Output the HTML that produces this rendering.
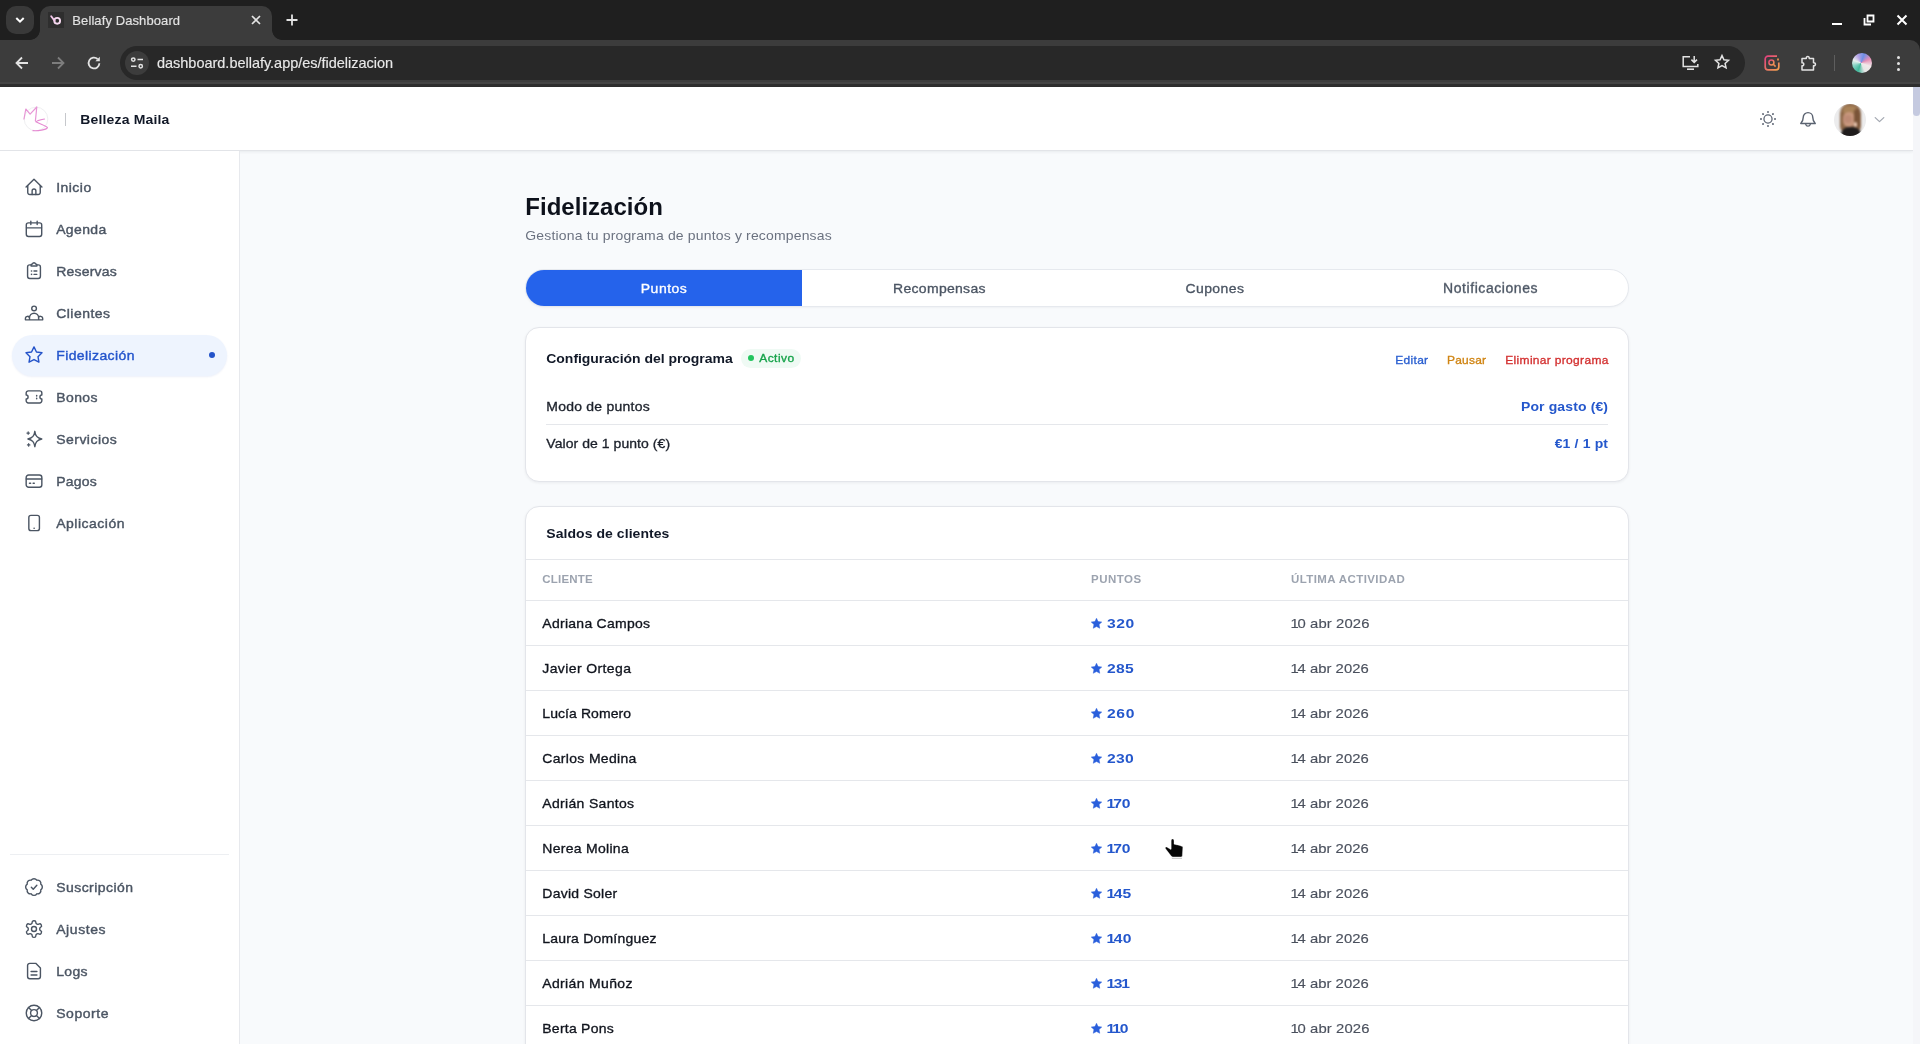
<!DOCTYPE html>
<html lang="es">
<head>
<meta charset="utf-8">
<title>Bellafy Dashboard</title>
<style>
*{box-sizing:border-box;margin:0;padding:0}
html,body{width:1920px;height:1044px;overflow:hidden;background:#f8fafc;font-family:"Liberation Sans",sans-serif;}
body{position:relative}
.abs{position:absolute}
svg{position:absolute;overflow:visible}
/* ---------- browser chrome ---------- */
#tabstrip{position:absolute;left:0;top:0;width:1920px;height:52px;background:#1f1f1f}
#toolbar{position:absolute;left:0;top:40px;width:1920px;height:42px;background:#3c3c3c;border-radius:0 10px 0 0}
#tbline1{position:absolute;left:0;top:82px;width:1920px;height:2px;background:#444}
#tbline2{position:absolute;left:0;top:84px;width:1920px;height:3px;background:#2d2d2d}
#tabsearch{position:absolute;left:6px;top:6px;width:28px;height:28px;border-radius:10px;background:#393939}
#tab{position:absolute;left:40px;top:6px;width:232px;height:34px;background:#3c3c3c;border-radius:10px 10px 0 0}
#tab:before,#tab:after{content:"";position:absolute;bottom:0;width:10px;height:10px}
#tab:before{left:-10px;background:radial-gradient(circle at 0 0,rgba(60,60,60,0) 9.5px,#3c3c3c 10.2px)}
#tab:after{right:-10px;background:radial-gradient(circle at 100% 0,rgba(60,60,60,0) 9.5px,#3c3c3c 10.2px)}
#urlbar{position:absolute;left:120px;top:46px;width:1625px;height:34px;border-radius:17px;background:#282828}
#siteinfo{position:absolute;left:125px;top:51px;width:24px;height:24px;border-radius:12px;background:#3c3c3c}
.ci{fill:none;stroke:#e3e3e3;stroke-width:2;stroke-linecap:butt;stroke-linejoin:miter}
/* ---------- app ---------- */
#apphead{position:absolute;left:0;top:87px;width:1913px;height:64px;background:#fff;border-bottom:1px solid #e2e4e8;box-shadow:0 1px 3px rgba(15,23,42,.07)}
#sidebar{position:absolute;left:0;top:151px;width:240px;height:893px;background:#fff;border-right:1px solid #e7e9ed}
#scroll{position:absolute;left:1913px;top:87px;width:7px;height:957px;background:#f5f6f9}
#thumb{position:absolute;left:1913px;top:87px;width:7px;height:29px;background:#c5cae0;border-radius:0 0 4px 4px}
.ico{width:20px;height:20px;left:24px;stroke:#4b5563;fill:none;stroke-width:1.7;stroke-linecap:round;stroke-linejoin:round}
#active{position:absolute;left:12px;top:335px;width:215px;height:41px;border-radius:21px;background:#eef4fe;box-shadow:0 1px 2px rgba(30,64,175,.08)}
.card{position:absolute;left:525px;width:1104px;background:#fff;border:1px solid #e3e5ea;border-radius:14px;box-shadow:0 1px 3px rgba(15,23,42,.06)}
.t{position:absolute;white-space:nowrap}
.hr{position:absolute;height:1px;background:#e5e7eb}
.star{width:13px;height:13px;fill:#2a5fdc;stroke:#2a5fdc;stroke-width:.9;stroke-linejoin:round}
</style>
</head>
<body>
<!-- ============ browser chrome ============ -->
<div id="tabstrip"></div>
<div id="toolbar"></div>
<div id="tbline1"></div><div id="tbline2"></div>
<div id="tabsearch"></div>
<svg class="ci" style="left:14px;top:14px;width:12px;height:12px" viewBox="0 0 12 12"><path d="M2.3 4l3.7 3.6L9.7 4" stroke="#fff" stroke-width="2"/></svg>
<div id="tab"></div>
<!-- favicon -->
<div class="abs" style="left:48px;top:12px;width:16px;height:16px;background:#2e2e2e"></div>
<svg style="left:48px;top:12px;width:16px;height:16px" viewBox="0 0 16 16"><circle cx="9.2" cy="8.8" r="2.9" fill="none" stroke="#f6d9f0" stroke-width="1.9"/><path d="M3.2 4.2 6.6 8.8" stroke="#f3c6ea" stroke-width="1.9" stroke-linecap="round"/></svg>
<!-- tab close -->
<svg class="ci" style="left:250px;top:14px;width:12px;height:12px" viewBox="0 0 12 12"><path d="M2 2l8 8M10 2l-8 8" stroke="#e3e3e3" stroke-width="1.7"/></svg>
<!-- new tab + -->
<svg class="ci" style="left:285px;top:13px;width:14px;height:14px" viewBox="0 0 14 14"><path d="M7 1.5v11M1.5 7h11" stroke="#e3e3e3" stroke-width="1.8"/></svg>
<!-- window controls -->
<div class="abs" style="left:1832px;top:23px;width:10px;height:2px;background:#fff"></div>
<svg class="ci" style="left:1863px;top:14px;width:12px;height:12px" viewBox="0 0 12 12"><path d="M4.5 1.5h6v6h-6z" stroke="#fff" stroke-width="1.8"/><path d="M1.5 4v6.5H8" stroke="#fff" stroke-width="1.8"/></svg>
<svg class="ci" style="left:1896px;top:14px;width:12px;height:12px" viewBox="0 0 12 12"><path d="M1.5 1.5l9 9M10.5 1.5l-9 9" stroke="#fff" stroke-width="2"/></svg>
<!-- nav buttons -->
<svg class="ci" style="left:14px;top:55px;width:16px;height:16px" viewBox="0 0 16 16"><path d="M14 8H3M8 2.5 2.5 8 8 13.5" stroke="#e3e3e3" stroke-width="1.8"/></svg>
<svg class="ci" style="left:50px;top:55px;width:16px;height:16px" viewBox="0 0 16 16"><path d="M2 8h11M8 2.5 13.5 8 8 13.5" stroke="#7d7d7d" stroke-width="1.8"/></svg>
<svg class="ci" style="left:86px;top:55px;width:16px;height:16px" viewBox="0 0 16 16"><path d="M13.4 8.3A5.4 5.4 0 1 1 11.6 4" stroke="#e3e3e3" stroke-width="1.8"/><path d="M13.8 1.8v4.4H9.4z" fill="#e3e3e3" stroke="none"/></svg>
<div id="urlbar"></div>
<div id="siteinfo"></div>
<svg class="ci" style="left:129px;top:55px;width:16px;height:16px" viewBox="0 0 16 16"><circle cx="4.3" cy="4.6" r="1.7" stroke-width="1.5"/><path d="M8.5 4.6h5.5M2 11.3h5.5" stroke-width="1.5"/><circle cx="11.7" cy="11.3" r="1.7" stroke-width="1.5"/></svg>
<!-- install -->
<svg class="ci" style="left:1682px;top:55px;width:17px;height:16px" viewBox="0 0 17 16"><path d="M8 1.7H1.2v9.8h14.6V9" stroke-width="1.5"/><path d="M5 14.2h7" stroke-width="1.6"/><path d="M12.2 1v6M9.4 4.6l2.8 2.8L15 4.6" stroke-width="1.5"/></svg>
<!-- bookmark star -->
<svg class="ci" style="left:1714px;top:54px;width:16px;height:16px" viewBox="0 0 16 16"><path d="M8 1.6l1.95 4.2 4.55.5-3.4 3.1.95 4.5L8 11.6l-4.05 2.3.95-4.5-3.4-3.1 4.55-.5z" stroke-width="1.5" stroke-linejoin="miter"/></svg>
<!-- extension (pink/orange) -->
<svg style="left:1764px;top:55px;width:16px;height:16px" viewBox="0 0 16 16"><defs><linearGradient id="gx" x1="0" y1="0" x2="1" y2="1"><stop offset="0" stop-color="#e23f7f"/><stop offset="1" stop-color="#f2a24e"/></linearGradient></defs><path d="M13 1.2H4A2.8 2.8 0 0 0 1.2 4v8A2.8 2.8 0 0 0 4 14.8h8a2.8 2.8 0 0 0 2.8-2.8V7.5" fill="none" stroke="url(#gx)" stroke-width="1.7"/><circle cx="7.4" cy="7.4" r="2.5" fill="none" stroke="url(#gx)" stroke-width="1.5"/><path d="M9.3 9.3l2.3 2.3" stroke="#ee8a55" stroke-width="1.5"/><path d="M14 3.5v2" stroke="#f0964f" stroke-width="1.7"/></svg>
<!-- puzzle -->
<svg class="ci" style="left:1800px;top:54px;width:18px;height:18px" viewBox="0 0 18 18"><path d="M2 4.5h4.3c-.5-2.6 3.4-2.6 2.9 0H13.5v4.3c2.6-.5 2.6 3.4 0 2.9V16H2v-4.3c2.4.4 2.4-3.3 0-2.9z" stroke-width="1.5" stroke-linejoin="round"/></svg>
<div class="abs" style="left:1834px;top:55px;width:1px;height:16px;background:#5e5e5e"></div>
<!-- chrome profile avatar -->
<div class="abs" style="left:1852px;top:53px;width:20px;height:20px;border-radius:10px;background:conic-gradient(from 200deg at 45% 50%,#3fb79a,#7fd0c0,#e9f0ee,#b9a6e6,#6e8fe6,#e58fb6,#f1e9ea,#e6e6e6,#3fb79a)"></div>
<!-- menu dots -->
<div class="abs" style="left:1896.5px;top:56px;width:3px;height:3px;border-radius:2px;background:#e3e3e3"></div>
<div class="abs" style="left:1896.5px;top:61.5px;width:3px;height:3px;border-radius:2px;background:#e3e3e3"></div>
<div class="abs" style="left:1896.5px;top:67.5px;width:3px;height:3px;border-radius:2px;background:#e3e3e3"></div>

<!-- ============ app header ============ -->
<div id="apphead"></div>
<svg style="left:22px;top:105px;width:28px;height:28px" viewBox="22 105 28 28"><circle cx="36" cy="119" r="11.8" fill="none" stroke="#efeff1" stroke-width="1"/><path d="M24 119 25.8 109l4.3 5.2L36.8 107l-1.4 13.9" fill="none" stroke="#e796d6" stroke-width="1.2" stroke-linejoin="round" stroke-linecap="round"/><path d="M44.5 119c-4 .8-8 1.6-8.6 2.8C40 124 47 126 47.4 127.6 46 130 38 131 33 130.7" fill="none" stroke="#e58ad2" stroke-width="1.2" stroke-linecap="round"/></svg>
<div class="abs" style="left:65px;top:113px;width:1px;height:13px;background:#c6c8cc"></div>
<!-- sun -->
<svg class="ico" style="left:1759px;top:110px;width:18px;height:18px;stroke:#5b6371" viewBox="0 0 24 24"><circle cx="12" cy="12" r="5.4"/><path d="M12 2.6v.1M12 21.3v.1M2.6 12h.1M21.3 12h.1M5.35 5.35l.07.07M18.58 18.58l.07.07M5.35 18.65l.07-.07M18.58 5.42l.07-.07" stroke-width="2.5"/></svg>
<!-- bell -->
<svg class="ico" style="left:1798px;top:109px;stroke:#5b6371" viewBox="0 0 24 24"><path d="M6.3 10a5.7 5.7 0 0 1 11.4 0c0 4 1.2 5.6 3 7.4H3.3c1.8-1.8 3-3.4 3-7.4z"/><path d="M9.3 18.5a2.8 2.8 0 0 0 5.4 0"/></svg>
<!-- user avatar (generic placeholder) -->
<div class="abs" style="left:1834px;top:104px;width:32px;height:32px;border-radius:16px;overflow:hidden;background:#ececed">
 <div class="abs" style="left:0;top:0;width:32px;height:32px;filter:blur(1.1px)">
  <div class="abs" style="left:6px;top:-1px;width:21px;height:30px;border-radius:11px 11px 7px 7px;background:#8d6748"></div>
  <div class="abs" style="left:9px;top:2px;width:14px;height:9px;border-radius:7px;background:#a98258"></div>
  <div class="abs" style="left:9px;top:8px;width:12px;height:15px;border-radius:6px;background:#c9987e"></div>
  <div class="abs" style="left:10px;top:11px;width:8px;height:8px;border-radius:4px;background:#bd8a74"></div>
  <div class="abs" style="left:7px;top:23px;width:20px;height:12px;border-radius:8px 8px 0 0;background:#1f1c1c"></div>
  <div class="abs" style="left:20px;top:5px;width:6px;height:19px;border-radius:3px;background:#7a5438"></div>
  <div class="abs" style="left:20px;top:18px;width:3px;height:5px;border-radius:2px;background:#e9c9b4"></div>
 </div>
</div>
<svg style="left:1873.5px;top:115.5px;width:11px;height:7.3px;fill:none;stroke:#a3a8b1;stroke-width:1.4;stroke-linecap:round;stroke-linejoin:round" viewBox="0 0 12 8"><path d="M1.3 1.8 6 6.2l4.7-4.4"/></svg>

<!-- ============ sidebar ============ -->
<div id="sidebar"></div>
<div id="active"></div>
<div class="abs" style="left:209px;top:352px;width:6px;height:6px;border-radius:3px;background:#2453c9"></div>
<!-- icons -->
<svg class="ico" style="top:177px" viewBox="0 0 24 24"><path d="M2.5 12 12 2.6l9.5 9.4"/><path d="M4.5 10.3v8.2A2.5 2.5 0 0 0 7 21h10a2.5 2.5 0 0 0 2.5-2.5v-8.2"/><path d="M9.75 21v-4.4a2.25 2.25 0 0 1 4.5 0V21"/></svg>
<svg class="ico" style="top:219px" viewBox="0 0 24 24"><rect x="2.75" y="4.6" width="18.5" height="16.4" rx="2.6"/><path d="M8.2 2.6v4M15.8 2.6v4M3 10.6h18"/></svg>
<svg class="ico" style="top:261px" viewBox="0 0 24 24"><rect x="4.3" y="4.6" width="15.4" height="16.4" rx="2.6"/><path d="M8.5 6V4.8A1.3 1.3 0 0 1 9.8 3.5h.3a2 2 0 0 1 3.8 0h.3a1.3 1.3 0 0 1 1.3 1.3V6z" fill="#fff"/><path d="M9 12h.1M9 16h.1" stroke-width="2"/><path d="M12 12h3.4M12 16h3.4"/></svg>
<svg class="ico" style="top:303px" viewBox="0 0 24 24"><circle cx="12.1" cy="6.5" r="2.8"/><path d="M1.7 20.2h20.8M1.7 20.2v-1.6a2.5 2.5 0 0 1 5-.2M17.4 18.4a2.5 2.5 0 0 1 5 .2v1.6M6.6 20.2v-2.4a5.5 5.5 0 0 1 11 0v2.4"/></svg>
<svg class="ico" style="top:345px;stroke:#2453c9" viewBox="0 0 24 24"><path d="M12 2.3l2.95 6.05 6.65.95-4.8 4.7 1.13 6.6L12 17.5l-5.93 3.1 1.13-6.6-4.8-4.7 6.65-.95z"/></svg>
<svg class="ico" style="top:387px" viewBox="0 0 24 24"><path d="M2.6 7.2a2.6 2.6 0 0 1 2.6-2.6h13.6a2.6 2.6 0 0 1 2.6 2.6v2.4a2.3 2.3 0 0 0 0 4.6v2.3a2.6 2.6 0 0 1-2.6 2.6H5.2a2.6 2.6 0 0 1-2.6-2.6v-2.3a2.3 2.3 0 0 0 0-4.6z"/><path d="M15.2 10.3v.6M15.2 13.6v.6" stroke-width="1.8"/></svg>
<svg class="ico" style="top:429px" viewBox="0 0 24 24"><path d="M13 2.8c.6 5.6 2.6 7.9 8.3 9.2-5.7 1.3-7.7 3.6-8.3 9.2-.6-5.6-2.6-7.9-8.3-9.2 5.700-1.300 7.700-3.600 8.300-9.200z"/><path d="M5 3.4v3M3.500 4.900h3M5.600 17.600v3M4.100 19.100h3" stroke-width="1.4"/></svg>
<svg class="ico" style="top:471px" viewBox="0 0 24 24"><rect x="2.6" y="4.700" width="18.8" height="14.7" rx="3"/><path d="M2.8 9.6h18.400"/><path d="M6.600 14.800h1.300M11 14.800h1.300" stroke-width="1.800"/></svg>
<svg class="ico" style="top:513px" viewBox="0 0 24 24"><rect x="5.8" y="2.800" width="12.700" height="18.400" rx="2.600"/><path d="M12.100 18.300h.1" stroke-width="1.800"/></svg>
<div class="hr" style="left:10px;top:854px;width:219px;background:#edeff2"></div>
<svg class="ico" style="top:877px" viewBox="0 0 24 24"><path d="M3.850 8.620a4 4 0 0 1 4.780-4.770 4 4 0 0 1 6.740 0 4 4 0 0 1 4.780 4.780 4 4 0 0 1 0 6.740 4 4 0 0 1-4.770 4.780 4 4 0 0 1-6.750 0 4 4 0 0 1-4.780-4.770 4 4 0 0 1 0-6.760z"/><path d="m8.800 12.300 2.300 2.300 4.300-4.700"/></svg>
<svg class="ico" style="top:919px" viewBox="0 0 24 24"><path d="M12.220 2h-.44a2 2 0 0 0-2 2v.180a2 2 0 0 1-1 1.730l-.43.250a2 2 0 0 1-2 0l-.15-.08a2 2 0 0 0-2.730.73l-.22.380a2 2 0 0 0 .73 2.730l.15.100a2 2 0 0 1 1 1.720v.51a2 2 0 0 1-1 1.740l-.15.09a2 2 0 0 0-.73 2.730l.22.380a2 2 0 0 0 2.730.73l.15-.08a2 2 0 0 1 2 0l.43.250a2 2 0 0 1 1 1.730V20a2 2 0 0 0 2 2h.44a2 2 0 0 0 2-2v-.18a2 2 0 0 1 1-1.730l.43-.250a2 2 0 0 1 2 0l.15.08a2 2 0 0 0 2.730-.73l.22-.39a2 2 0 0 0-.73-2.730l-.15-.08a2 2 0 0 1-1-1.740v-.5a2 2 0 0 1 1-1.740l.15-.09a2 2 0 0 0 .73-2.730l-.22-.38a2 2 0 0 0-2.730-.73l-.15.08a2 2 0 0 1-2 0l-.43-.250a2 2 0 0 1-1-1.730V4a2 2 0 0 0-2-2z"/><circle cx="12" cy="12" r="3"/></svg>
<svg class="ico" style="top:961px" viewBox="0 0 24 24"><path d="M4.3 5.400a2.600 2.600 0 0 1 2.600-2.600h7.200l5.600 5.600v10.200a2.600 2.600 0 0 1-2.600 2.600H6.900a2.600 2.600 0 0 1-2.600-2.600z"/><path d="M8.500 12.600h7M8.500 16.700h7"/></svg>
<svg class="ico" style="top:1003px" viewBox="0 0 24 24"><circle cx="12" cy="12" r="9.300"/><circle cx="12" cy="12" r="4.100"/><path d="M5.400 5.400l3.700 3.700M18.600 5.400l-3.700 3.700M5.400 18.600l3.700-3.700M18.600 18.600l-3.700-3.700"/></svg>

<!-- ============ main ============ -->
<!-- tabs -->
<div class="abs" style="left:525px;top:269px;width:1104px;height:38px;border-radius:19px;background:#fff;border:1px solid #e6e9ee;overflow:hidden;box-shadow:0 1px 2px rgba(15,23,42,.04)">
  <div class="abs" style="left:0;top:0;width:276px;height:36px;background:#2563eb"></div>
</div>
<!-- config card -->
<div class="card" style="top:327px;height:155px"></div>
<div class="abs" style="left:741px;top:348.500px;width:60px;height:19px;border-radius:10px;background:#effaf4"></div>
<div class="abs" style="left:748px;top:355px;width:6px;height:6px;border-radius:3px;background:#22c55e"></div>
<div class="hr" style="left:546px;top:424px;width:1062px"></div>
<!-- table card -->
<div class="card" style="top:506px;height:600px"></div>
<div class="hr" style="left:526px;top:559px;width:1102px"></div>
<div class="hr" style="left:526px;top:600px;width:1102px"></div>
<svg class="star" style="left:1090.4px;top:616.6px" viewBox="0 0 24 24"><path d="M12 2.300l2.900 6.200 6.800.8-5 4.700 1.300 6.800L12 17.600l-6 3.200 1.300-6.800-5-4.700 6.800-.8z"/></svg>
<div class="hr" style="left:526px;top:645px;width:1102px"></div>
<svg class="star" style="left:1090.4px;top:661.6px" viewBox="0 0 24 24"><path d="M12 2.300l2.900 6.200 6.800.8-5 4.700 1.300 6.800L12 17.600l-6 3.200 1.300-6.800-5-4.700 6.800-.8z"/></svg>
<div class="hr" style="left:526px;top:690px;width:1102px"></div>
<svg class="star" style="left:1090.4px;top:706.6px" viewBox="0 0 24 24"><path d="M12 2.300l2.900 6.200 6.800.8-5 4.700 1.300 6.800L12 17.600l-6 3.200 1.300-6.800-5-4.700 6.800-.8z"/></svg>
<div class="hr" style="left:526px;top:735px;width:1102px"></div>
<svg class="star" style="left:1090.4px;top:751.6px" viewBox="0 0 24 24"><path d="M12 2.300l2.900 6.200 6.800.8-5 4.700 1.300 6.800L12 17.600l-6 3.200 1.300-6.800-5-4.700 6.800-.8z"/></svg>
<div class="hr" style="left:526px;top:780px;width:1102px"></div>
<svg class="star" style="left:1090.4px;top:796.6px" viewBox="0 0 24 24"><path d="M12 2.300l2.900 6.200 6.800.8-5 4.700 1.300 6.800L12 17.600l-6 3.200 1.300-6.800-5-4.700 6.800-.8z"/></svg>
<div class="hr" style="left:526px;top:825px;width:1102px"></div>
<svg class="star" style="left:1090.4px;top:841.6px" viewBox="0 0 24 24"><path d="M12 2.300l2.900 6.200 6.800.8-5 4.700 1.300 6.800L12 17.600l-6 3.200 1.300-6.800-5-4.700 6.800-.8z"/></svg>
<div class="hr" style="left:526px;top:870px;width:1102px"></div>
<svg class="star" style="left:1090.4px;top:886.6px" viewBox="0 0 24 24"><path d="M12 2.300l2.900 6.200 6.800.8-5 4.700 1.300 6.800L12 17.600l-6 3.200 1.300-6.800-5-4.700 6.800-.8z"/></svg>
<div class="hr" style="left:526px;top:915px;width:1102px"></div>
<svg class="star" style="left:1090.4px;top:931.6px" viewBox="0 0 24 24"><path d="M12 2.300l2.900 6.200 6.800.8-5 4.700 1.300 6.800L12 17.600l-6 3.200 1.300-6.800-5-4.700 6.800-.8z"/></svg>
<div class="hr" style="left:526px;top:960px;width:1102px"></div>
<svg class="star" style="left:1090.4px;top:976.6px" viewBox="0 0 24 24"><path d="M12 2.300l2.900 6.200 6.800.8-5 4.700 1.300 6.800L12 17.600l-6 3.200 1.300-6.800-5-4.700 6.800-.8z"/></svg>
<div class="hr" style="left:526px;top:1005px;width:1102px"></div>
<svg class="star" style="left:1090.4px;top:1021.6px" viewBox="0 0 24 24"><path d="M12 2.300l2.900 6.200 6.800.8-5 4.700 1.300 6.800L12 17.600l-6 3.200 1.300-6.800-5-4.700 6.800-.8z"/></svg>
<div style="position:absolute;left:0;top:0;width:1920px;height:1044px;will-change:transform">
<div class="t" id="t0" style="left:72.30px;transform-origin:0 50%;transform:scale(1.0,1.0);top:12.30px;font-size:13px;color:#e3e3e3;font-weight:normal;-webkit-text-stroke:0.15px currentColor;letter-spacing:0.098px;line-height:17px;height:17px;">Bellafy Dashboard</div>
<div class="t" id="t1" style="left:157.00px;transform-origin:0 50%;transform:scale(1.0,1.0);top:53.55px;font-size:14.5px;color:#e8e8e8;font-weight:normal;-webkit-text-stroke:0.15px currentColor;letter-spacing:-0.018px;line-height:18.5px;height:18.5px;">dashboard.bellafy.app/es/fidelizacion</div>
<div class="t" id="t2" style="left:80.30px;transform-origin:0 50%;transform:scale(1.0,0.97);top:110.30px;font-size:14px;color:#111827;font-weight:bold;letter-spacing:0.162px;line-height:18px;height:18px;">Belleza Maila</div>
<div class="t" id="t3" style="left:56.20px;transform-origin:0 50%;transform:scale(1.0,0.97);top:177.60px;font-size:14px;color:#4b5563;font-weight:normal;-webkit-text-stroke:0.42px currentColor;letter-spacing:0.463px;line-height:18px;height:18px;">Inicio</div>
<div class="t" id="t4" style="left:56.20px;transform-origin:0 50%;transform:scale(1.0,0.97);top:219.60px;font-size:14px;color:#4b5563;font-weight:normal;-webkit-text-stroke:0.42px currentColor;letter-spacing:0.344px;line-height:18px;height:18px;">Agenda</div>
<div class="t" id="t5" style="left:56.20px;transform-origin:0 50%;transform:scale(1.0,0.97);top:261.60px;font-size:14px;color:#4b5563;font-weight:normal;-webkit-text-stroke:0.42px currentColor;letter-spacing:0.208px;line-height:18px;height:18px;">Reservas</div>
<div class="t" id="t6" style="left:56.20px;transform-origin:0 50%;transform:scale(1.0,0.97);top:303.60px;font-size:14px;color:#4b5563;font-weight:normal;-webkit-text-stroke:0.42px currentColor;letter-spacing:0.472px;line-height:18px;height:18px;">Clientes</div>
<div class="t" id="t7" style="left:56.20px;transform-origin:0 50%;transform:scale(1.0,0.97);top:345.60px;font-size:14px;color:#2455cc;font-weight:normal;-webkit-text-stroke:0.42px currentColor;letter-spacing:0.397px;line-height:18px;height:18px;">Fidelización</div>
<div class="t" id="t8" style="left:56.20px;transform-origin:0 50%;transform:scale(1.0,0.97);top:387.60px;font-size:14px;color:#4b5563;font-weight:normal;-webkit-text-stroke:0.42px currentColor;letter-spacing:0.424px;line-height:18px;height:18px;">Bonos</div>
<div class="t" id="t9" style="left:56.20px;transform-origin:0 50%;transform:scale(1.0,0.97);top:429.60px;font-size:14px;color:#4b5563;font-weight:normal;-webkit-text-stroke:0.42px currentColor;letter-spacing:0.475px;line-height:18px;height:18px;">Servicios</div>
<div class="t" id="t10" style="left:56.20px;transform-origin:0 50%;transform:scale(1.0,0.97);top:471.60px;font-size:14px;color:#4b5563;font-weight:normal;-webkit-text-stroke:0.42px currentColor;letter-spacing:0.224px;line-height:18px;height:18px;">Pagos</div>
<div class="t" id="t11" style="left:56.20px;transform-origin:0 50%;transform:scale(1.0,0.97);top:513.60px;font-size:14px;color:#4b5563;font-weight:normal;-webkit-text-stroke:0.42px currentColor;letter-spacing:0.508px;line-height:18px;height:18px;">Aplicación</div>
<div class="t" id="t12" style="left:56.20px;transform-origin:0 50%;transform:scale(1.0,0.97);top:877.60px;font-size:14px;color:#4b5563;font-weight:normal;-webkit-text-stroke:0.42px currentColor;letter-spacing:0.443px;line-height:18px;height:18px;">Suscripción</div>
<div class="t" id="t13" style="left:56.20px;transform-origin:0 50%;transform:scale(1.0,0.97);top:919.60px;font-size:14px;color:#4b5563;font-weight:normal;-webkit-text-stroke:0.42px currentColor;letter-spacing:0.580px;line-height:18px;height:18px;">Ajustes</div>
<div class="t" id="t14" style="left:56.20px;transform-origin:0 50%;transform:scale(1.0,0.97);top:961.60px;font-size:14px;color:#4b5563;font-weight:normal;-webkit-text-stroke:0.42px currentColor;letter-spacing:0.347px;line-height:18px;height:18px;">Logs</div>
<div class="t" id="t15" style="left:56.20px;transform-origin:0 50%;transform:scale(1.0,0.97);top:1003.60px;font-size:14px;color:#4b5563;font-weight:normal;-webkit-text-stroke:0.42px currentColor;letter-spacing:0.559px;line-height:18px;height:18px;">Soporte</div>
<div class="t" id="t16" style="left:525.30px;transform-origin:0 50%;transform:scale(1.0,0.97);top:192.50px;font-size:24px;color:#0d111b;font-weight:bold;letter-spacing:0.022px;line-height:28px;height:28px;">Fidelización</div>
<div class="t" id="t17" style="left:525.30px;transform-origin:0 50%;transform:scale(1.0,0.97);top:226.30px;font-size:14px;color:#6b7280;font-weight:normal;letter-spacing:0.158px;line-height:18px;height:18px;">Gestiona tu programa de puntos y recompensas</div>
<div class="t" id="t18" style="left:164.05px;width:1000px;text-align:center;transform-origin:50% 50%;transform:scale(1.0,0.97);top:279.30px;font-size:14px;color:#ffffff;font-weight:normal;-webkit-text-stroke:0.34px currentColor;letter-spacing:0.501px;line-height:18px;height:18px;">Puntos</div>
<div class="t" id="t19" style="left:439.44px;width:1000px;text-align:center;transform-origin:50% 50%;transform:scale(1.0,0.97);top:279.30px;font-size:14px;color:#4b5563;font-weight:normal;-webkit-text-stroke:0.34px currentColor;letter-spacing:0.290px;line-height:18px;height:18px;">Recompensas</div>
<div class="t" id="t20" style="left:714.90px;width:1000px;text-align:center;transform-origin:50% 50%;transform:scale(1.0,0.97);top:279.30px;font-size:14px;color:#4b5563;font-weight:normal;-webkit-text-stroke:0.34px currentColor;letter-spacing:0.392px;line-height:18px;height:18px;">Cupones</div>
<div class="t" id="t21" style="left:990.58px;width:1000px;text-align:center;transform-origin:50% 50%;transform:scale(1.0,0.97);top:279.30px;font-size:14px;color:#4b5563;font-weight:normal;-webkit-text-stroke:0.34px currentColor;letter-spacing:0.557px;line-height:18px;height:18px;">Notificaciones</div>
<div class="t" id="t22" style="left:546.30px;transform-origin:0 50%;transform:scale(1.0,0.97);top:349.30px;font-size:14px;color:#111827;font-weight:bold;letter-spacing:-0.043px;line-height:18px;height:18px;">Configuración del programa</div>
<div class="t" id="t23" style="left:759.20px;transform-origin:0 50%;transform:scale(1.0,0.97);top:350.20px;font-size:12px;color:#16a34a;font-weight:normal;-webkit-text-stroke:0.34px currentColor;letter-spacing:0.463px;line-height:16px;height:16px;">Activo</div>
<div class="t" id="t24" style="left:1395.30px;transform-origin:0 50%;transform:scale(1.0,0.97);top:351.50px;font-size:12px;color:#2a5fd0;font-weight:normal;-webkit-text-stroke:0.34px currentColor;letter-spacing:0.288px;line-height:16px;height:16px;">Editar</div>
<div class="t" id="t25" style="left:1447.00px;transform-origin:0 50%;transform:scale(1.0,0.97);top:351.50px;font-size:12px;color:#d08514;font-weight:normal;-webkit-text-stroke:0.34px currentColor;letter-spacing:0.214px;line-height:16px;height:16px;">Pausar</div>
<div class="t" id="t26" style="left:1505.30px;transform-origin:0 50%;transform:scale(1.0,0.97);top:351.50px;font-size:12px;color:#d33030;font-weight:normal;-webkit-text-stroke:0.34px currentColor;letter-spacing:0.316px;line-height:16px;height:16px;">Eliminar programa</div>
<div class="t" id="t27" style="left:546.30px;transform-origin:0 50%;transform:scale(1.0,0.97);top:397.30px;font-size:14px;color:#1c212b;font-weight:normal;-webkit-text-stroke:0.34px currentColor;letter-spacing:0.230px;line-height:18px;height:18px;">Modo de puntos</div>
<div class="t" id="t28" style="right:311.87px;transform-origin:100% 50%;transform:scale(1.0,0.97);top:397.30px;font-size:14px;color:#2457cc;font-weight:bold;letter-spacing:0.127px;line-height:18px;height:18px;">Por gasto (€)</div>
<div class="t" id="t29" style="left:546.30px;transform-origin:0 50%;transform:scale(1.0,0.97);top:434.30px;font-size:14px;color:#1c212b;font-weight:normal;-webkit-text-stroke:0.34px currentColor;letter-spacing:0.057px;line-height:18px;height:18px;">Valor de 1 punto (€)</div>
<div class="t" id="t30" style="right:311.84px;transform-origin:100% 50%;transform:scale(1.0,0.97);top:434.30px;font-size:14px;color:#2457cc;font-weight:bold;letter-spacing:0.157px;line-height:18px;height:18px;">€1 / 1 pt</div>
<div class="t" id="t31" style="left:546.30px;transform-origin:0 50%;transform:scale(1.0,0.97);top:524.30px;font-size:14px;color:#111827;font-weight:bold;letter-spacing:0.055px;line-height:18px;height:18px;">Saldos de clientes</div>
<div class="t" id="t32" style="left:542.30px;transform-origin:0 50%;transform:scale(1.0,0.97);top:571.85px;font-size:11.5px;color:#9ca3af;font-weight:bold;letter-spacing:0.199px;line-height:15.5px;height:15.5px;">CLIENTE</div>
<div class="t" id="t33" style="left:1091.00px;transform-origin:0 50%;transform:scale(1.0,0.97);top:571.85px;font-size:11.5px;color:#9ca3af;font-weight:bold;letter-spacing:0.476px;line-height:15.5px;height:15.5px;">PUNTOS</div>
<div class="t" id="t34" style="left:1291.00px;transform-origin:0 50%;transform:scale(1.0,0.97);top:571.85px;font-size:11.5px;color:#9ca3af;font-weight:bold;letter-spacing:0.410px;line-height:15.5px;height:15.5px;">ÚLTIMA ACTIVIDAD</div>
<div class="t" id="t35" style="left:542.30px;transform-origin:0 50%;transform:scale(1.0,0.97);top:614.30px;font-size:14px;color:#10141d;font-weight:normal;-webkit-text-stroke:0.34px currentColor;letter-spacing:0.271px;line-height:18px;height:18px;">Adriana Campos</div>
<div class="t" id="t36" style="left:1107.00px;transform-origin:0 50%;transform:scale(1.12,0.97);top:614.30px;font-size:14px;color:#2457cc;font-weight:bold;letter-spacing:0.440px;line-height:18px;height:18px;">320</div>
<div class="t" id="t37" style="left:1292.10px;transform-origin:0 50%;transform:scale(1.06,0.97);top:614.30px;font-size:14px;color:#4a505d;font-weight:normal;-webkit-text-stroke:0.15px currentColor;letter-spacing:0.098px;line-height:18px;height:18px;"><span style="margin:0 -1.35px">1</span>0 abr 2026</div>
<div class="t" id="t38" style="left:542.30px;transform-origin:0 50%;transform:scale(1.0,0.97);top:659.30px;font-size:14px;color:#10141d;font-weight:normal;-webkit-text-stroke:0.34px currentColor;letter-spacing:0.388px;line-height:18px;height:18px;">Javier Ortega</div>
<div class="t" id="t39" style="left:1107.00px;transform-origin:0 50%;transform:scale(1.12,0.97);top:659.30px;font-size:14px;color:#2457cc;font-weight:bold;letter-spacing:0.261px;line-height:18px;height:18px;">285</div>
<div class="t" id="t40" style="left:1292.10px;transform-origin:0 50%;transform:scale(1.06,0.97);top:659.30px;font-size:14px;color:#4a505d;font-weight:normal;-webkit-text-stroke:0.15px currentColor;letter-spacing:0.032px;line-height:18px;height:18px;"><span style="margin:0 -1.35px">1</span>4 abr 2026</div>
<div class="t" id="t41" style="left:542.30px;transform-origin:0 50%;transform:scale(1.0,0.97);top:704.30px;font-size:14px;color:#10141d;font-weight:normal;-webkit-text-stroke:0.34px currentColor;letter-spacing:0.078px;line-height:18px;height:18px;">Lucía Romero</div>
<div class="t" id="t42" style="left:1107.00px;transform-origin:0 50%;transform:scale(1.12,0.97);top:704.30px;font-size:14px;color:#2457cc;font-weight:bold;letter-spacing:0.574px;line-height:18px;height:18px;">260</div>
<div class="t" id="t43" style="left:1292.10px;transform-origin:0 50%;transform:scale(1.06,0.97);top:704.30px;font-size:14px;color:#4a505d;font-weight:normal;-webkit-text-stroke:0.15px currentColor;letter-spacing:0.032px;line-height:18px;height:18px;"><span style="margin:0 -1.35px">1</span>4 abr 2026</div>
<div class="t" id="t44" style="left:542.30px;transform-origin:0 50%;transform:scale(1.0,0.97);top:749.30px;font-size:14px;color:#10141d;font-weight:normal;-webkit-text-stroke:0.34px currentColor;letter-spacing:0.320px;line-height:18px;height:18px;">Carlos Medina</div>
<div class="t" id="t45" style="left:1107.00px;transform-origin:0 50%;transform:scale(1.12,0.97);top:749.30px;font-size:14px;color:#2457cc;font-weight:bold;letter-spacing:0.261px;line-height:18px;height:18px;">230</div>
<div class="t" id="t46" style="left:1292.10px;transform-origin:0 50%;transform:scale(1.06,0.97);top:749.30px;font-size:14px;color:#4a505d;font-weight:normal;-webkit-text-stroke:0.15px currentColor;letter-spacing:0.032px;line-height:18px;height:18px;"><span style="margin:0 -1.35px">1</span>4 abr 2026</div>
<div class="t" id="t47" style="left:542.30px;transform-origin:0 50%;transform:scale(1.0,0.97);top:794.30px;font-size:14px;color:#10141d;font-weight:normal;-webkit-text-stroke:0.34px currentColor;letter-spacing:0.321px;line-height:18px;height:18px;">Adrián Santos</div>
<div class="t" id="t48" style="left:1108.10px;transform-origin:0 50%;transform:scale(1.12,0.97);top:794.30px;font-size:14px;color:#2457cc;font-weight:bold;letter-spacing:-0.322px;line-height:18px;height:18px;"><span style="margin:0 -1.35px">1</span>70</div>
<div class="t" id="t49" style="left:1292.10px;transform-origin:0 50%;transform:scale(1.06,0.97);top:794.30px;font-size:14px;color:#4a505d;font-weight:normal;-webkit-text-stroke:0.15px currentColor;letter-spacing:0.032px;line-height:18px;height:18px;"><span style="margin:0 -1.35px">1</span>4 abr 2026</div>
<div class="t" id="t50" style="left:542.30px;transform-origin:0 50%;transform:scale(1.0,0.97);top:839.30px;font-size:14px;color:#10141d;font-weight:normal;-webkit-text-stroke:0.34px currentColor;letter-spacing:0.285px;line-height:18px;height:18px;">Nerea Molina</div>
<div class="t" id="t51" style="left:1108.10px;transform-origin:0 50%;transform:scale(1.12,0.97);top:839.30px;font-size:14px;color:#2457cc;font-weight:bold;letter-spacing:-0.322px;line-height:18px;height:18px;"><span style="margin:0 -1.35px">1</span>70</div>
<div class="t" id="t52" style="left:1292.10px;transform-origin:0 50%;transform:scale(1.06,0.97);top:839.30px;font-size:14px;color:#4a505d;font-weight:normal;-webkit-text-stroke:0.15px currentColor;letter-spacing:0.032px;line-height:18px;height:18px;"><span style="margin:0 -1.35px">1</span>4 abr 2026</div>
<div class="t" id="t53" style="left:542.30px;transform-origin:0 50%;transform:scale(1.0,0.97);top:884.30px;font-size:14px;color:#10141d;font-weight:normal;-webkit-text-stroke:0.34px currentColor;letter-spacing:0.243px;line-height:18px;height:18px;">David Soler</div>
<div class="t" id="t54" style="left:1108.10px;transform-origin:0 50%;transform:scale(1.12,0.97);top:884.30px;font-size:14px;color:#2457cc;font-weight:bold;letter-spacing:-0.010px;line-height:18px;height:18px;"><span style="margin:0 -1.35px">1</span>45</div>
<div class="t" id="t55" style="left:1292.10px;transform-origin:0 50%;transform:scale(1.06,0.97);top:884.30px;font-size:14px;color:#4a505d;font-weight:normal;-webkit-text-stroke:0.15px currentColor;letter-spacing:0.032px;line-height:18px;height:18px;"><span style="margin:0 -1.35px">1</span>4 abr 2026</div>
<div class="t" id="t56" style="left:542.30px;transform-origin:0 50%;transform:scale(1.0,0.97);top:929.30px;font-size:14px;color:#10141d;font-weight:normal;-webkit-text-stroke:0.34px currentColor;letter-spacing:0.200px;line-height:18px;height:18px;">Laura Domínguez</div>
<div class="t" id="t57" style="left:1108.10px;transform-origin:0 50%;transform:scale(1.12,0.97);top:929.30px;font-size:14px;color:#2457cc;font-weight:bold;letter-spacing:0.124px;line-height:18px;height:18px;"><span style="margin:0 -1.35px">1</span>40</div>
<div class="t" id="t58" style="left:1292.10px;transform-origin:0 50%;transform:scale(1.06,0.97);top:929.30px;font-size:14px;color:#4a505d;font-weight:normal;-webkit-text-stroke:0.15px currentColor;letter-spacing:0.032px;line-height:18px;height:18px;"><span style="margin:0 -1.35px">1</span>4 abr 2026</div>
<div class="t" id="t59" style="left:542.30px;transform-origin:0 50%;transform:scale(1.0,0.97);top:974.30px;font-size:14px;color:#10141d;font-weight:normal;-webkit-text-stroke:0.34px currentColor;letter-spacing:0.337px;line-height:18px;height:18px;">Adrián Muñoz</div>
<div class="t" id="t60" style="left:1108.10px;transform-origin:0 50%;transform:scale(1.12,0.97);top:974.30px;font-size:14px;color:#2457cc;font-weight:bold;letter-spacing:0.121px;line-height:18px;height:18px;"><span style="margin:0 -1.35px">1</span>3<span style="margin:0 -1.35px">1</span></div>
<div class="t" id="t61" style="left:1292.10px;transform-origin:0 50%;transform:scale(1.06,0.97);top:974.30px;font-size:14px;color:#4a505d;font-weight:normal;-webkit-text-stroke:0.15px currentColor;letter-spacing:0.032px;line-height:18px;height:18px;"><span style="margin:0 -1.35px">1</span>4 abr 2026</div>
<div class="t" id="t62" style="left:542.30px;transform-origin:0 50%;transform:scale(1.0,0.97);top:1019.30px;font-size:14px;color:#10141d;font-weight:normal;-webkit-text-stroke:0.34px currentColor;letter-spacing:0.237px;line-height:18px;height:18px;">Berta Pons</div>
<div class="t" id="t63" style="left:1108.10px;transform-origin:0 50%;transform:scale(1.12,0.97);top:1019.30px;font-size:14px;color:#2457cc;font-weight:bold;letter-spacing:0.121px;line-height:18px;height:18px;"><span style="margin:0 -1.35px">1</span><span style="margin:0 -1.35px">1</span>0</div>
<div class="t" id="t64" style="left:1292.10px;transform-origin:0 50%;transform:scale(1.06,0.97);top:1019.30px;font-size:14px;color:#4a505d;font-weight:normal;-webkit-text-stroke:0.15px currentColor;letter-spacing:0.098px;line-height:18px;height:18px;"><span style="margin:0 -1.35px">1</span>0 abr 2026</div>
</div>
<!-- mouse cursor (hand) -->
<svg style="left:1160px;top:834px;width:28px;height:28px" viewBox="1160 834 28 28"><path d="M1171.2 841c0-2.600 2.800-2.600 2.800 0v3.200c.9-.2 1.600.1 2 .5 2.500.300 5 1 6.300 1.900.500.300.600.700.500 1.300l-.5 7.800c0 .8-.5 1.200-1.300 1.200h-8.300c-.6 0-1.100-.3-1.500-.8l-5.600-7.300c-.9-1.200.3-2.200 1.500-1.600l3.300 2.100c.4.300.8.100.8-.4z" fill="#050505" stroke="#fff" stroke-opacity=".55" stroke-width=".6"/><path d="M1171.800 858.300h10.200" stroke="#9a9a9a" stroke-width=".6" fill="none"/></svg>
<div id="scroll"></div><div id="thumb"></div>
</body>
</html>
